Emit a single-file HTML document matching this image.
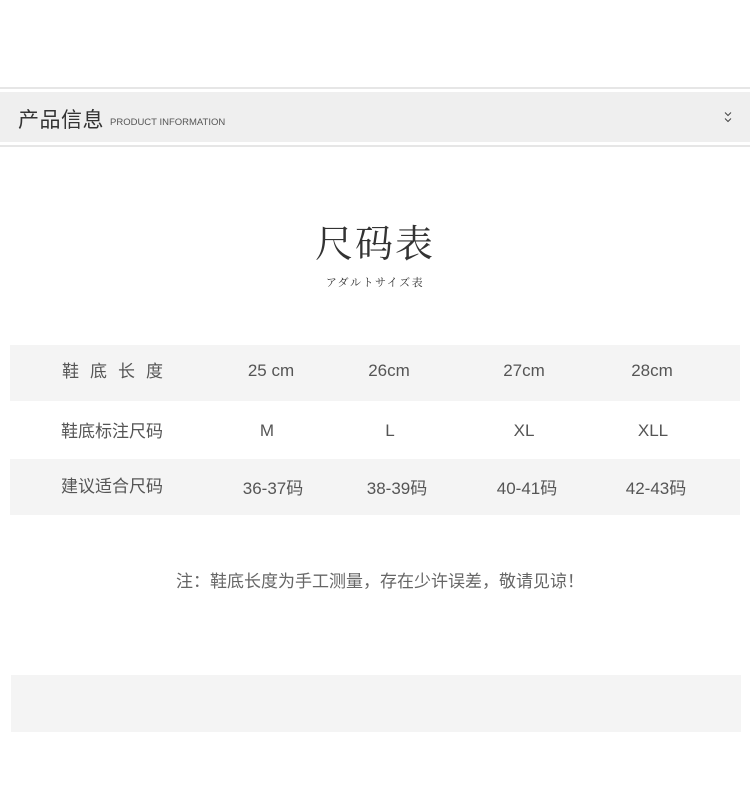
<!DOCTYPE html>
<html><head><meta charset="utf-8"><style>
body{margin:0;width:750px;height:789px;background:#fff;position:relative;font-family:"Liberation Sans","Noto Sans CJK SC",sans-serif;color:#444;overflow:hidden}
.a{position:absolute}
.c{position:absolute;transform:translateX(-50%);white-space:nowrap;font-size:17px;color:#555}
</style></head><body>
<div class="a" style="left:0;top:87px;width:750px;height:2px;background:#e6e6e6"></div>
<div class="a" style="left:0;top:92px;width:750px;height:50px;background:#efefef"></div>
<div class="a" style="left:0;top:145px;width:750px;height:2px;background:#e6e6e6"></div>
<div class="a" style="left:18px;top:104px;font-size:21px;color:#333;letter-spacing:0.5px">产品信息</div>
<div class="a" style="left:110px;top:117px;font-size:9.5px;color:#555">PRODUCT INFORMATION</div>
<svg class="a" style="left:723px;top:111px" width="10" height="13" viewBox="0 0 10 13"><path d="M2 1.5L5 4.5L8 1.5M2 7.5L5 10.5L8 7.5" fill="none" stroke="#444" stroke-width="1"/></svg>
<div class="a" style="left:0;width:750px;text-align:center;top:213px;font-size:38px;color:#333;letter-spacing:2px;font-family:'Noto Serif CJK SC',serif">尺码表</div>
<div class="a" style="left:0;width:750px;text-align:center;top:274px;font-size:11px;color:#333;letter-spacing:1.5px;font-family:'Noto Serif CJK SC',serif">アダルトサイズ表</div>
<div class="a" style="left:10px;top:345px;width:730px;height:56px;background:#f4f4f4"></div>
<div class="a" style="left:10px;top:459px;width:730px;height:56px;background:#f4f4f4"></div>
<div class="c" style="left:118px;top:357px;letter-spacing:11px">鞋底长度</div>
<div class="c" style="left:271px;top:361px">25 cm</div>
<div class="c" style="left:389px;top:361px">26cm</div>
<div class="c" style="left:524px;top:361px">27cm</div>
<div class="c" style="left:652px;top:361px">28cm</div>
<div class="c" style="left:112px;top:417px">鞋底标注尺码</div>
<div class="c" style="left:267px;top:421px">M</div>
<div class="c" style="left:390px;top:421px">L</div>
<div class="c" style="left:524px;top:421px">XL</div>
<div class="c" style="left:653px;top:421px">XLL</div>
<div class="c" style="left:112px;top:472px">建议适合尺码</div>
<div class="c" style="left:273px;top:474px">36-37码</div>
<div class="c" style="left:397px;top:474px">38-39码</div>
<div class="c" style="left:527px;top:474px">40-41码</div>
<div class="c" style="left:656px;top:474px">42-43码</div>
<div class="c" style="left:380px;top:567px;color:#666">注：鞋底长度为手工测量，存在少许误差，敬请见谅！</div>
<div class="a" style="left:11px;top:675px;width:730px;height:57px;background:#f4f4f4"></div>
</body></html>
